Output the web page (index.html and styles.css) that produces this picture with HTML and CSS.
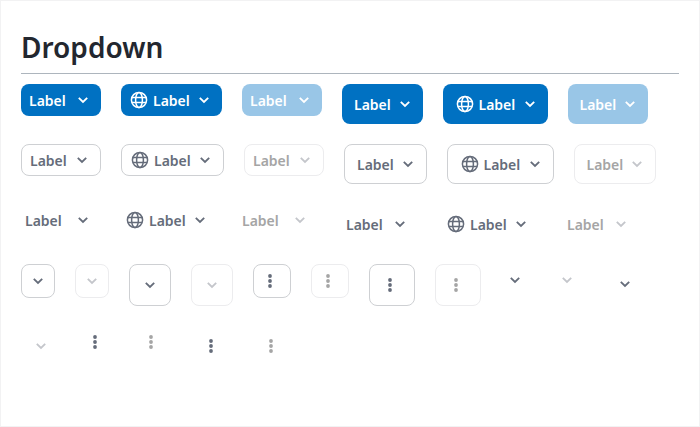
FILE: index.html
```
<!DOCTYPE html>
<html lang="en">
<head>
<meta charset="utf-8">
<title>Dropdown</title>
<link rel="stylesheet" href="styles.css">
</head>
<body>
<svg class="defs" aria-hidden="true">
<symbol id="chev" viewBox="0 0 16 16"><path d="M3.8 5.8 8 10l4.2-4.2" fill="none" stroke="currentColor" stroke-width="1.8"/></symbol>
<symbol id="globe" viewBox="0 0 18 18"><g fill="none" stroke="currentColor" stroke-width="1.5"><circle cx="9" cy="9" r="7.6"/><ellipse cx="9" cy="9" rx="3.4" ry="7.6"/><path d="M2 6.5h14M2 11.5h14"/></g></symbol>
<symbol id="dots" viewBox="0 0 16 16"><g fill="currentColor"><circle cx="8" cy="3" r="1.9"/><circle cx="8" cy="8" r="1.9"/><circle cx="8" cy="13" r="1.9"/></g></symbol>
</svg>
<main class="page">
<h1 class="title">Dropdown</h1>
<div class="row">
<button class="btn primary">Label<svg class="chev"><use href="#chev"/></svg></button>
<button class="btn primary icon"><svg class="globe"><use href="#globe"/></svg>Label<svg class="chev"><use href="#chev"/></svg></button>
<button class="btn primary off">Label<svg class="chev"><use href="#chev"/></svg></button>
<button class="btn primary large">Label<svg class="chev"><use href="#chev"/></svg></button>
<button class="btn primary large icon"><svg class="globe"><use href="#globe"/></svg>Label<svg class="chev"><use href="#chev"/></svg></button>
<button class="btn primary large off">Label<svg class="chev"><use href="#chev"/></svg></button>
</div>
<div class="row">
<button class="btn outline">Label<svg class="chev"><use href="#chev"/></svg></button>
<button class="btn outline icon"><svg class="globe"><use href="#globe"/></svg>Label<svg class="chev"><use href="#chev"/></svg></button>
<button class="btn outline off">Label<svg class="chev"><use href="#chev"/></svg></button>
<button class="btn outline large">Label<svg class="chev"><use href="#chev"/></svg></button>
<button class="btn outline large icon"><svg class="globe"><use href="#globe"/></svg>Label<svg class="chev"><use href="#chev"/></svg></button>
<button class="btn outline large off">Label<svg class="chev"><use href="#chev"/></svg></button>
</div>
<div class="row">
<button class="btn plain">Label<svg class="chev"><use href="#chev"/></svg></button>
<button class="btn plain icon"><svg class="globe"><use href="#globe"/></svg>Label<svg class="chev"><use href="#chev"/></svg></button>
<button class="btn plain off">Label<svg class="chev"><use href="#chev"/></svg></button>
<button class="btn plain large">Label<svg class="chev"><use href="#chev"/></svg></button>
<button class="btn plain large icon"><svg class="globe"><use href="#globe"/></svg>Label<svg class="chev"><use href="#chev"/></svg></button>
<button class="btn plain large off">Label<svg class="chev"><use href="#chev"/></svg></button>
</div>
<div class="row compact">
<button class="box"><svg><use href="#chev"/></svg></button>
<button class="box off"><svg><use href="#chev"/></svg></button>
<button class="box large"><svg><use href="#chev"/></svg></button>
<button class="box large off"><svg><use href="#chev"/></svg></button>
<button class="box menu"><svg><use href="#dots"/></svg></button>
<button class="box menu off"><svg><use href="#dots"/></svg></button>
<button class="box menu large"><svg><use href="#dots"/></svg></button>
<button class="box menu large off"><svg><use href="#dots"/></svg></button>
<button class="bare"><svg><use href="#chev"/></svg></button>
<button class="bare off"><svg><use href="#chev"/></svg></button>
<button class="bare large"><svg><use href="#chev"/></svg></button>
</div>
<div class="row">
<button class="bare large off"><svg><use href="#chev"/></svg></button>
<button class="bare menu"><svg><use href="#dots"/></svg></button>
<button class="bare menu off"><svg><use href="#dots"/></svg></button>
<button class="bare menu large"><svg><use href="#dots"/></svg></button>
<button class="bare menu large off"><svg><use href="#dots"/></svg></button>
</div>
</main>
</body>
</html>
```
FILE: styles.css
```
* { box-sizing: border-box; }
body { margin: 0; background: #fff; font-family: "Noto Sans", sans-serif; }
.defs { display: none; }
.page { height: 427px; border: 1px solid #f2f2f3; padding: 20px; }
.title { margin: 0 0 10px; height: 53px; padding-top: 7px; border-bottom: 1px solid #adb5bd; font-size: 28px; line-height: 38px; font-weight: 600; color: #23272f; }
.row { display: flex; align-items: flex-start; gap: 20px; height: 60px; }
.row.compact { height: 62px; }
button { display: flex; align-items: center; flex: none; margin: 0; padding: 0; border: 0; background: none; color: #656c7a; font: 600 14px/20px "Noto Sans", sans-serif; }
svg { flex: none; width: 16px; height: 16px; }
.btn { width: 80px; height: 32px; padding: 2px 10px 0 8px; border-radius: 8px; }
.btn svg { margin-top: -2px; }
.btn.large { width: 80.5px; height: 40px; padding-left: 12px; }
.btn.icon { width: 101px; padding-left: 9px; }
.btn.large.icon { width: 105px; padding-left: 13px; }
.chev { margin-left: auto; }
.globe { width: 18px; height: 18px; margin-right: 5px; }
.primary { background: #0071c2; color: #fff; }
.primary.off { background: #99c6e7; }
.outline { border: 1px solid #ced0d3; }
.outline.icon { width: 103px; }
.outline.large { width: 82.5px; }
.outline.large.icon { width: 107px; }
.plain { padding-left: 4px; }
.plain.icon { width: 97px; padding-left: 5px; }
.plain.large { width: 80px; padding-left: 8px; }
.plain.large.icon { width: 101px; padding-left: 9px; }
.plain.large.off { padding-right: 10.5px; }
.outline.off, .plain.off { color: #a5a5a5; }
.outline.off { border-color: #ececee; }
.outline.off .chev, .plain.off .chev { color: #c4c6cb; }
.box { justify-content: center; width: 34px; height: 34px; border: 1px solid #ced0d3; border-radius: 8px; }
.box.large { width: 42px; height: 42px; }
.box.menu { width: 38px; padding-right: 4px; }
.box.menu.large { width: 46px; }
.box.off { border-color: #ececee; }
.bare { justify-content: center; width: 32px; height: 32px; padding-right: 4px; }
.bare.large { width: 40px; height: 40px; padding-right: 0; }
.bare.menu { width: 36px; padding-right: 8px; }
.bare.menu.large { width: 40px; padding-right: 4px; }
.box.off, .bare.off { color: #c4c6cb; }
.menu.off { color: #a5a5a5; }
```
